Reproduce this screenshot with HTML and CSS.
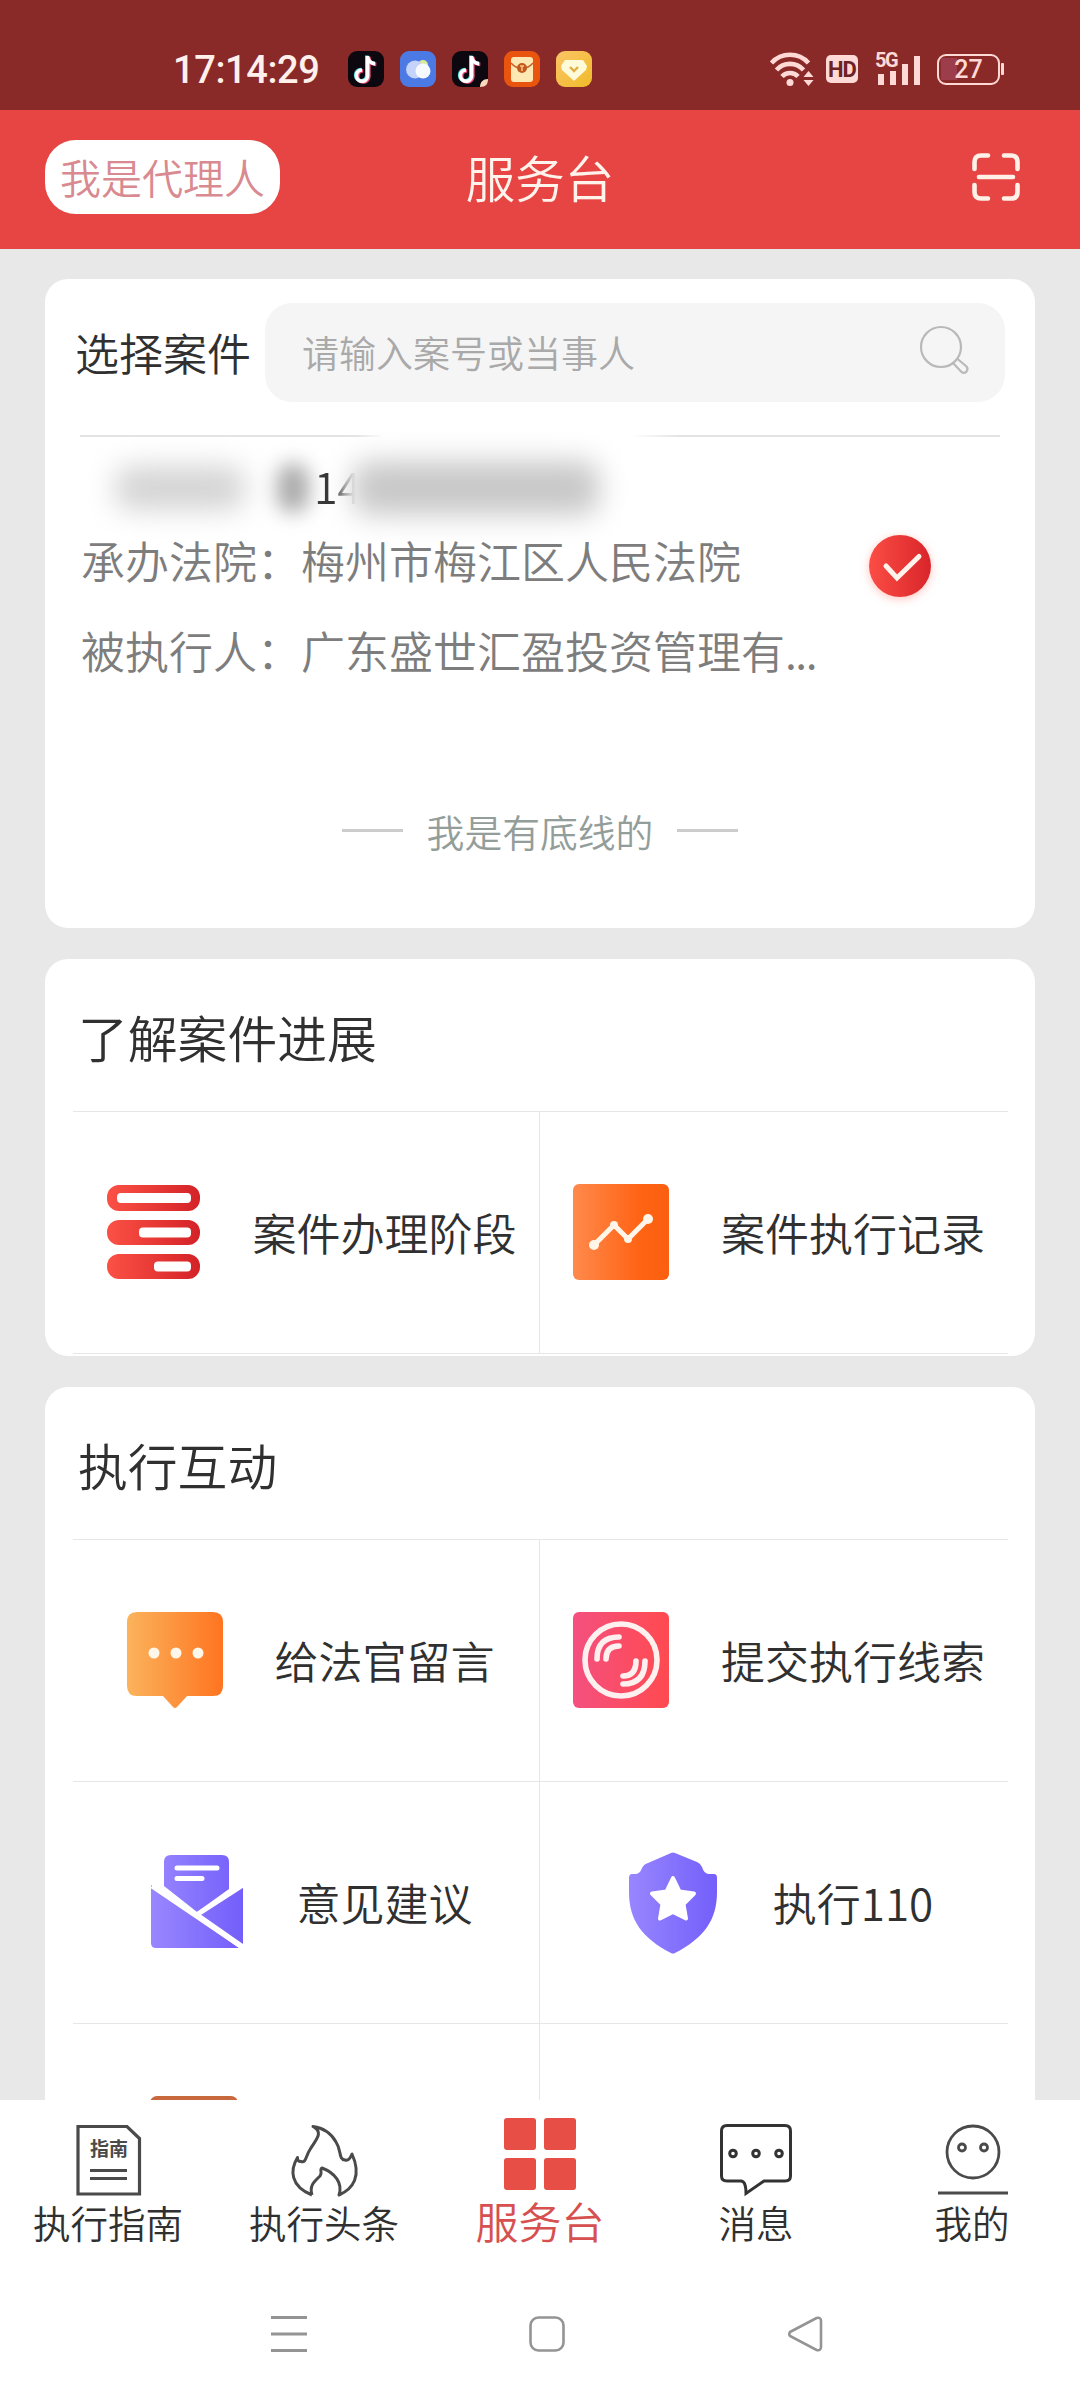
FILE: index.html
```html
<!DOCTYPE html>
<html lang="zh-CN">
<head>
<meta charset="utf-8">
<title>服务台</title>
<link rel="stylesheet" href="styles.css">
</head>
<body>
<svg class="defs" width="0" height="0" aria-hidden="true">
  <defs>
    <linearGradient id="red" x1="0" x2="1" y1="0" y2="0"><stop offset="0" stop-color="#fb4d45"/><stop offset="1" stop-color="#d9252a"/></linearGradient>
    <linearGradient id="redbars" gradientUnits="userSpaceOnUse" x1="2" x2="95" y1="0" y2="0"><stop offset="0" stop-color="#fb5145"/><stop offset="1" stop-color="#d42227"/></linearGradient>
    <linearGradient id="orange" x1="0" x2="1" y1="0" y2="0"><stop offset="0" stop-color="#ff8a4c"/><stop offset=".7" stop-color="#ff6314"/><stop offset="1" stop-color="#fa600f"/></linearGradient>
    <linearGradient id="amber" x1="0" x2="1" y1="0" y2="0"><stop offset="0" stop-color="#fbb35c"/><stop offset="1" stop-color="#ff7420"/></linearGradient>
    <linearGradient id="pink" x1="0" x2="1" y1="0" y2="0"><stop offset="0" stop-color="#f4507f"/><stop offset="1" stop-color="#ff4a50"/></linearGradient>
    <linearGradient id="violet" gradientUnits="userSpaceOnUse" x1="2" x2="94" y1="0" y2="0"><stop offset="0" stop-color="#9887ff"/><stop offset="1" stop-color="#735efa"/></linearGradient>
    <linearGradient id="gold" x1="0" x2="1" y1="0" y2="1"><stop offset="0" stop-color="#fcc468"/><stop offset="1" stop-color="#efbb28"/></linearGradient>
    <g id="note">
      <rect width="36" height="36" rx="9" fill="#0d0810"/>
      <g fill="none" stroke-width="3.6"><path d="M19.6 5v20a5.600 5.600 0 1 1-5.600-6M19.600 6c.8 4 3.600 6.400 7.500 6.600" stroke="#3fd8d8" transform="translate(-.8 -.5)"/><path d="M19.600 5v20a5.600 5.600 0 1 1-5.600-6M19.600 6c.8 4 3.600 6.400 7.500 6.600" stroke="#f0507c" transform="translate(1.200 .8)"/><path d="M19.600 5v20a5.600 5.600 0 1 1-5.600-6M19.600 6c.8 4 3.600 6.400 7.500 6.600" stroke="#fff"/></g>
    </g>
  </defs>
</svg>
<div class="screen">
  <div class="status">
    <span class="clock">17:14:29</span>
    <div class="apps">
      <svg width="36" height="36"><use href="#note"/></svg>
      <svg width="36" height="36"><rect width="36" height="36" rx="9" fill="#4c7ae4"/><circle cx="23" cy="14" r="5" fill="#dbea9a"/><circle cx="15" cy="18.500" r="9" fill="#c5d3fb"/><circle cx="23" cy="20" r="7.500" fill="#f6faff"/></svg>
      <svg width="36" height="36"><use href="#note"/><path d="M28 36c0-5 3-8 8-8 0 5-2 8-8 8Z" fill="#fbd9bd"/></svg>
      <svg width="36" height="36"><rect width="36" height="36" rx="9" fill="#e9540f"/><rect x="7" y="6" width="22" height="25" rx="3" fill="#fde8b4"/><path d="M7 12c6 7 16 7 22 0" fill="none" stroke="#c8602a" stroke-width="1.500"/><circle cx="18" cy="17" r="5" fill="#c05a20"/><path d="M16 15h4M18 15v5" stroke="#fbc27c" stroke-width="1.500"/></svg>
      <svg width="36" height="36"><rect width="36" height="36" rx="9" fill="url(#gold)"/><path d="M9 9h18l4 6-1 4-11 10q-1 1-2 0L6 19l-1-4Z" fill="#fffbd9"/><path d="m14 16 4 4 4-4" fill="none" stroke="#dfae45" stroke-width="2.400"/></svg>
    </div>
    <svg class="wifi" width="46" height="36" viewBox="0 0 46 36"><g fill="none" stroke="#ffd9d6" stroke-width="4.600"><path d="M1.500 12a25 25 0 0 1 37 0"/><path d="M6.500 19a18 18 0 0 1 27 0"/><path d="M12 25.500a11 11 0 0 1 16 0"/></g><circle cx="20" cy="31.500" r="3.500" fill="#ffd9d6"/><path d="m38.500 20 5 6h-10ZM38.500 35l5-6h-10Z" fill="#ffd9d6"/></svg>
    <span class="hd">HD</span>
    <div class="signal"><span class="net">5G</span><svg width="46" height="34"><path d="M3 22h6v11H3ZM15 19h6v14h-6ZM27 12h6v21h-6ZM39 4h6v29h-6Z" fill="#ffd9d6"/></svg></div>
    <div class="battery"><span class="level">27</span></div>
    <i class="nub"></i>
  </div>
  <header class="header">
    <button class="agent">我是代理人</button>
    <h1 class="title">服务台</h1>
    <svg class="scan" width="48" height="48" fill="none" stroke="#fff0e8" stroke-width="4.600" stroke-linecap="round"><path d="M2.500 16V9q0-6.500 6.500-6.500h7M32 2.500h7q6.500 0 6.500 6.500v7M45.500 32v7q0 6.500-6.500 6.500h-7M16 45.500H9q-6.500 0-6.500-6.500v-7M7 24h34"/></svg>
  </header>
  <main class="content">
    <section class="card picker">
      <div class="searchrow">
        <span class="picklabel">选择案件</span>
        <div class="search"><span class="hint">请输入案号或当事人</span>
          <svg width="50" height="50" fill="none" stroke="#b9b9b9" stroke-width="2.200"><circle cx="21" cy="21" r="20"/><path d="m33 37 8.500 9q3 2 5-.5t0-5L37 32.500"/></svg>
        </div>
      </div>
      <div class="rule"></div>
      <div class="case">
        <div class="facts">
          <div class="number"><i class="smudge s1"></i><i class="smudge s2"></i><span class="digits">14</span><i class="smudge s3"></i></div>
          <p class="fact">承办法院：梅州市梅江区人民法院</p>
          <p class="fact">被执行人：广东盛世汇盈投资管理有<span class="dots">...</span></p>
        </div>
        <svg class="check" width="62" height="62"><circle cx="31" cy="31" r="31" fill="url(#red)"/><path d="m17 31 11 12 22-21.500" fill="none" stroke="#fff3ec" stroke-width="5" stroke-linecap="round"/></svg>
      </div>
      <div class="end"><i></i><span>我是有底线的</span><i></i></div>
    </section>

    <section class="card progress">
      <h2 class="heading">了解案件进展</h2>
      <div class="grid">
        <div class="cell"><svg class="icon" viewBox="0 0 96 96"><g fill="url(#redbars)"><rect x="2" y="1" width="93" height="26" rx="12"/><rect x="2" y="36" width="93" height="25" rx="12"/><rect x="2" y="70" width="93" height="25" rx="12"/></g><g fill="#fff"><rect x="12" y="9" width="74" height="10" rx="4"/><rect x="34" y="43.500" width="52" height="10" rx="4"/><rect x="49" y="77.500" width="37" height="10" rx="4"/></g></svg><span>案件办理阶段</span></div>
        <div class="cell"><svg class="icon" viewBox="0 0 96 96"><rect width="96" height="96" rx="6" fill="url(#orange)"/><path d="m21 61 20-20 14 14 20-20" fill="none" stroke="#fff5e8" stroke-width="5" stroke-linejoin="round"/><g fill="#fff5e8"><circle cx="21" cy="61" r="5"/><circle cx="41" cy="41" r="4"/><circle cx="55" cy="55" r="4"/><circle cx="75" cy="35" r="5"/></g></svg><span>案件执行记录</span></div>
      </div>
    </section>

    <section class="card">
      <h2 class="heading">执行互动</h2>
      <div class="grid">
        <div class="cell"><svg class="icon" viewBox="0 0 96 96"><path d="M10 0h76q10 0 10 10v64q0 10-10 10H60L50 95q-2 2-4 0L36 84H10Q0 84 0 74V10Q0 0 10 0Z" fill="url(#amber)"/><g fill="#fff8ea"><circle cx="27" cy="41" r="5.500"/><circle cx="49" cy="41" r="5.500"/><circle cx="71" cy="41" r="5.500"/></g></svg><span>给法官留言</span></div>
        <div class="cell"><svg class="icon" viewBox="0 0 96 96"><rect width="96" height="96" rx="6" fill="url(#pink)"/><g fill="none" stroke="#fff0f0" stroke-width="5.600" stroke-linecap="round"><circle cx="48" cy="48" r="36"/><path d="M24 47q0-22 22-22M33 47q0-13 13-13M72 49q0 23-22 23M63 49q0 15-13 15"/></g></svg><span>提交执行线索</span></div>
        <div class="cell"><svg class="icon" viewBox="0 0 96 96"><g fill="url(#violet)"><path d="M22 1h51q7 0 7 7v27L48 58 15 32V8q0-7 7-7Z"/><path d="M2 31 90 94H7q-5 0-5-5Z"/><path d="M94 31v59L51 60Z"/></g><path d="m3 32 90 61M49 60 94 31" stroke="#fff" stroke-width="5"/><path d="M28 14h40M28 24.500h25" stroke="#fff" stroke-width="5" stroke-linecap="round"/></svg><span>意见建议</span></div>
        <div class="cell"><svg class="icon" viewBox="0 0 96 96"><path d="M46-1q2-1 4 0l22 9q3 1 5 5 2 7 7 7h5q3 0 3 4v14c0 28-13 46-42 61q-2 1-4 0C17 84 4 66 4 38V24q0-4 3-4h3q5 0 7-6 2-4 6-5Z" fill="url(#violet)"/><path d="m48 24 6.500 13.500 14.500 2L58.500 50 61 64.500 48 58l-13 6.500L37.500 50 27 39.500l14.500-2Z" fill="#fff" stroke="#fff" stroke-width="4" stroke-linejoin="round"/></svg><span>执行110</span></div>
        <div class="cell next"><svg class="icon" viewBox="0 0 96 96"><rect x="1" width="88" height="94" rx="7" fill="#c8683d"/></svg><span class="blank"></span></div>
        <div class="cell next"></div>
      </div>
    </section>
  </main>

  <nav class="tabs">
    <a class="tab"><svg width="72" height="72" viewBox="0 0 72 72"><path d="M6 2.500h49l12.500 12v55.500H6Z" fill="none" stroke="#4a4a4a" stroke-width="3.200"/><text class="guide" x="37" y="32" text-anchor="middle">指南</text><path d="M18 46.500h37M18 54.500h37" stroke="#4a4a4a" stroke-width="3"/></svg><span>执行指南</span></a>
    <a class="tab"><svg width="72" height="72" viewBox="0 0 72 72" fill="none" stroke="#4a4a4a" stroke-width="3" stroke-linejoin="round"><path d="M24 71C21 61 27 57 32 52c3-4-1-6 2-8C47 49 55 59 51 71 65 65 74 52 64 30c-2 5-4 7-7 6-7-1-3-9-9-18C43 9 36 4 25 2.500c11 6 3 13-3 23-4 6-4 14-9 12q-4 0-3.500-4C2 46 2 62 24 71"/></svg><span>执行头条</span></a>
    <a class="tab on"><svg width="72" height="72" viewBox="0 0 72 72" fill="#e74e46"><rect width="32" height="32" rx="3"/><rect x="40" width="32" height="32" rx="3"/><rect y="40" width="32" height="32" rx="3"/><rect x="40" y="40" width="32" height="32" rx="3"/></svg><span>服务台</span></a>
    <a class="tab"><svg width="72" height="72" viewBox="0 0 72 72" fill="none" stroke="#333" stroke-width="3"><path d="M7 1.500h58q5.500 0 5.500 5.500v45q0 5-5.500 5H44L26 69.500q0-12.500-5-12.500H7q-5.500 0-5.500-5V7q0-5.500 5.500-5.500Z"/><circle cx="13" cy="29.500" r="3.300"/><circle cx="36" cy="29.500" r="3.300"/><circle cx="59" cy="29.500" r="3.300"/></svg><span>消息</span></a>
    <a class="tab"><svg width="72" height="72" viewBox="0 0 72 72" fill="none" stroke="#4a4a4a" stroke-width="2.800"><circle cx="37" cy="28" r="26"/><circle cx="26" cy="23.500" r="3.500"/><circle cx="48" cy="23.500" r="3.500"/><path d="M2 69h70"/></svg><span>我的</span></a>
  </nav>
  <div class="sysnav">
    <svg width="36" height="36" stroke="#949494" stroke-width="3"><path d="M0 1.500h36M0 18h36M0 34.500h36"/></svg>
    <svg width="36" height="36" fill="none" stroke="#949494" stroke-width="2.600"><rect x="1.500" y="1.500" width="33" height="33" rx="8"/></svg>
    <svg width="36" height="36" fill="none" stroke="#949494" stroke-width="2.600"><path d="M3 16 29.500 2Q34 1 34 5v26q0 4-4.500 3L3 20q-1.500-2 0-4Z"/></svg>
  </div>
</div>
</body>
</html>
```
FILE: styles.css
```css
* { box-sizing: border-box; }
body { margin: 0; background: #fff; }
.defs { display: block; }
.screen { display: flex; flex-direction: column; width: 1080px; height: 2400px; overflow: hidden; font-family: "Noto Sans CJK SC", sans-serif; font-weight: 350; color: #303030; }
svg { display: block; flex: none; overflow: visible; }
h1, h2, p { margin: 0; font-weight: inherit; }

.status { display: flex; align-items: center; flex: none; height: 110px; padding: 28px 76px 0 173px; background: #892a29; color: #ffd9d6; }
.clock { width: 175px; padding-top: 2px; font: 500 38px/36px Roboto, sans-serif; letter-spacing: -.4px; color: #fff0ec; white-space: nowrap; }
.apps { display: flex; gap: 16px; }
.wifi { margin-left: 178px; }
.hd { width: 32px; height: 28px; margin-left: 10px; border-radius: 5px; background: #ffd9d6; color: #6d2223; font: 700 22px/29px "Liberation Sans Narrow", Roboto, sans-serif; letter-spacing: -1px; text-align: center; }
.signal { position: relative; margin-left: 17px; }
.net { position: absolute; left: 0; top: -2px; font: 700 20px/20px Roboto, sans-serif; letter-spacing: -1.500px; }
.battery { width: 63px; height: 31px; margin-left: 16px; border: 2.500px solid #ffd9d6; border-radius: 9px; background: linear-gradient(90deg, #9d3d4b 30%, transparent 30%) 2px 2px / 55px 22px no-repeat; text-align: center; }
.level { font: 500 25px/27px Roboto, sans-serif; }
.nub { width: 3px; height: 12px; margin-left: 1px; background: #ffd9d6; border-radius: 1px; }

.header { display: grid; grid-template-columns: 235px 1fr 235px; align-items: center; flex: none; height: 139px; padding: 0 60px 5px 45px; background: #e64543; }
.agent { height: 74px; padding: 0 0 2px; border: 0; border-radius: 31px; background: #fff; color: #d98a90; font: 350 41px/72px "Noto Sans CJK SC", sans-serif; }
.title { padding-left: 15px; font-size: 49.500px; line-height: 60px; text-align: center; color: #fff3ec; }
.scan { justify-self: end; }

.content { display: flex; flex-direction: column; gap: 31px; height: 1851px; padding: 30px 45px 0; background: #e8e8e8; overflow: hidden; }
.card { flex: none; border-radius: 23px; background: #fff; overflow: hidden; }
.picker { height: 649px; padding-top: 24px; }
.searchrow { display: flex; align-items: center; height: 99px; padding: 0 30px; }
.picklabel { width: 190px; font-size: 44px; line-height: 50px; padding-bottom: 1px; white-space: nowrap; }
.search { display: flex; justify-content: space-between; align-items: center; flex: 1; height: 99px; padding: 0 35px 4px 37px; border-radius: 27px; background: #f5f5f5; }
.hint { padding-top: 2px; font-size: 37px; line-height: 50px; color: #a9a9a9; }
.rule { height: 2px; margin: 33px 35px 0; background: linear-gradient(90deg, #e4e4e4 30%, transparent 33%, transparent 60%, #e4e4e4 65%); }
.case { display: flex; align-items: center; height: 258px; padding-left: 36px; }
.facts { width: 788px; font-size: 44px; white-space: nowrap; color: #7d7d7d; }
.number { display: flex; align-items: center; height: 78px; padding: 24px 0 0 34px; }
.smudge { height: 44px; border-radius: 16px; background: #d4d4d4; filter: blur(14px); }
.s1 { width: 130px; }
.s2 { width: 32px; height: 50px; margin-left: 32px; background: #aaa; filter: blur(10px); }
.digits { margin: -6px 0 0 5px; line-height: 50px; background: linear-gradient(90deg, #333 45%, #999 65%, transparent 90%); background-clip: text; color: transparent; font-size: 43px; }
.s3 { width: 246px; height: 54px; margin-left: -8px; background: #c8c8c8; }
.fact { line-height: 90px; }
.dots { letter-spacing: -1.500px; }
.check { border-radius: 50%; box-shadow: 0 2px 9px #ff8a7e80; }
.end { display: flex; justify-content: center; align-items: center; gap: 24px; height: 233px; padding: 37px 0 0; font-size: 37.800px; color: #939d99; }
.end i { width: 61px; height: 3px; background: #ccc; margin-top: 0; }

.progress { height: 397px; }
.heading { height: 152px; padding-left: 33px; font-size: 49.800px; line-height: 155px; }
.grid { display: grid; grid-template-columns: 467px 468px; grid-auto-rows: 242px; margin: 0 27px 0 28px; border-top: 1.500px solid #e6e6e6; }
.cell { display: flex; align-items: center; justify-content: center; gap: 52px; padding: 0 0 2px 9px; border-bottom: 1.500px solid #e6e6e6; font-size: 44px; line-height: 60px; white-space: nowrap; }
.cell:nth-child(odd) { border-right: 1.500px solid #e6e6e6; }
.cell:nth-child(even) { padding-left: 10px; }
.icon { width: 96px; height: 96px; }
.blank { width: 176px; }

.tabs { display: grid; grid-template-columns: repeat(5, 216px); flex: none; height: 170px; padding-top: 24px; background: #fff; }
.tab { display: flex; flex-direction: column; align-items: center; font-size: 37.500px; line-height: 50px; }
.tab span { margin-top: 1px; }
.guide { font-size: 19px; font-weight: 700; fill: #4a4a4a; }
.on { margin-top: -6px; font-size: 43px; color: #d6504f; }
.on span { margin-top: 5px; }
.sysnav { display: flex; align-items: flex-start; gap: 222px; padding: 46px 0 0 271px; height: 130px; flex: none; }
```
